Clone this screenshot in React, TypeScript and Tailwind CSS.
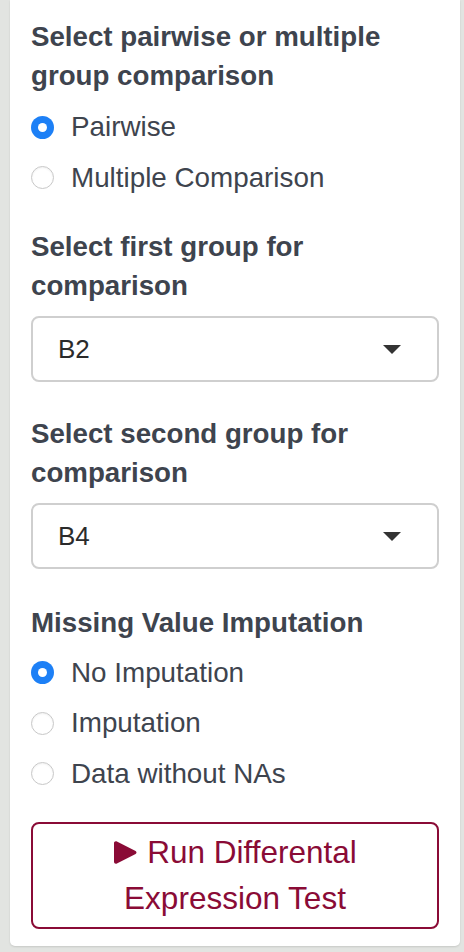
import React from "react";

type Option = { label: string; checked?: boolean };

function RadioGroup({ options, className }: { options: Option[]; className?: string }) {
  return (
    <div className={className}>
      {options.map((o) => (
        <label key={o.label} className="flex h-[50.5px] items-center">
          {o.checked ? (
            <span className="flex h-[23px] w-[23px] shrink-0 items-center justify-center rounded-full bg-[#1d80f6]">
              <span className="h-[9px] w-[9px] rounded-full bg-white" />
            </span>
          ) : (
            <span className="h-[23px] w-[23px] shrink-0 rounded-full border border-[#c8c8c8] bg-white shadow-[inset_0_1px_2px_rgba(0,0,0,0.06)]" />
          )}
          <span className="ml-[17px] text-[27.8px] text-[#3e444e]">{o.label}</span>
        </label>
      ))}
    </div>
  );
}

function Heading({ children, className }: { children: React.ReactNode; className?: string }) {
  return (
    <h3 className={`text-[27.7px] font-bold leading-[38.5px] text-[#3e444e] ${className ?? ""}`}>
      {children}
    </h3>
  );
}

function SelectBox({ value, className }: { value: string; className?: string }) {
  return (
    <div
      className={`flex h-[66px] items-center justify-between rounded-[8px] border-2 border-[#cfcfcf] bg-white pl-[25px] pr-[36px] ${className ?? ""}`}
    >
      <span className="text-[26px] text-[#2b2b2b]">{value}</span>
      <svg width="18" height="9" viewBox="0 0 18 9">
        <path d="M0 0 H18 L9 9 Z" fill="#333" />
      </svg>
    </div>
  );
}

export default function App() {
  return (
    <div
      className="h-[952px] w-[464px] overflow-hidden bg-[#e2e4e1]"
      style={{ fontFamily: '"Liberation Sans", Arial, sans-serif' }}
    >
      <div className="ml-[10px] h-[946px] w-[450px] rounded-b-[5px] bg-white px-[21px] pt-[18px] shadow-[0_1px_2px_rgba(0,0,0,0.12)]">
        <Heading>
          Select pairwise or multiple
          <br />
          group comparison
        </Heading>
        <RadioGroup
          className="mt-[7px]"
          options={[{ label: "Pairwise", checked: true }, { label: "Multiple Comparison" }]}
        />

        <Heading className="mt-[25px]">
          Select first group for
          <br />
          comparison
        </Heading>
        <SelectBox value="B2" className="mt-[11px]" />

        <Heading className="mt-[33px]">
          Select second group for
          <br />
          comparison
        </Heading>
        <SelectBox value="B4" className="mt-[11px]" />

        <Heading className="mt-[35px]">Missing Value Imputation</Heading>
        <RadioGroup
          className="mt-[5px]"
          options={[
            { label: "No Imputation", checked: true },
            { label: "Imputation" },
            { label: "Data without NAs" },
          ]}
        />

        <button className="mt-[23px] flex h-[107px] w-full flex-col items-center justify-center rounded-[8px] border-2 border-[#8a0b36] bg-white text-[31.5px] leading-[45.5px] text-[#8a0b36]">
          <span className="flex items-center">
            <svg width="24" height="23" viewBox="0 0 24 23" className="mr-[10px]">
              <path
                d="M1 2.2 C1 0.6 2.6 -0.2 3.9 0.6 L22.6 10 C23.8 10.7 23.8 12.3 22.6 13 L3.9 22.4 C2.6 23.2 1 22.4 1 20.8 Z"
                fill="#8a0b36"
              />
            </svg>
            Run Differental
          </span>
          <span>Expression Test</span>
        </button>
      </div>
    </div>
  );
}
